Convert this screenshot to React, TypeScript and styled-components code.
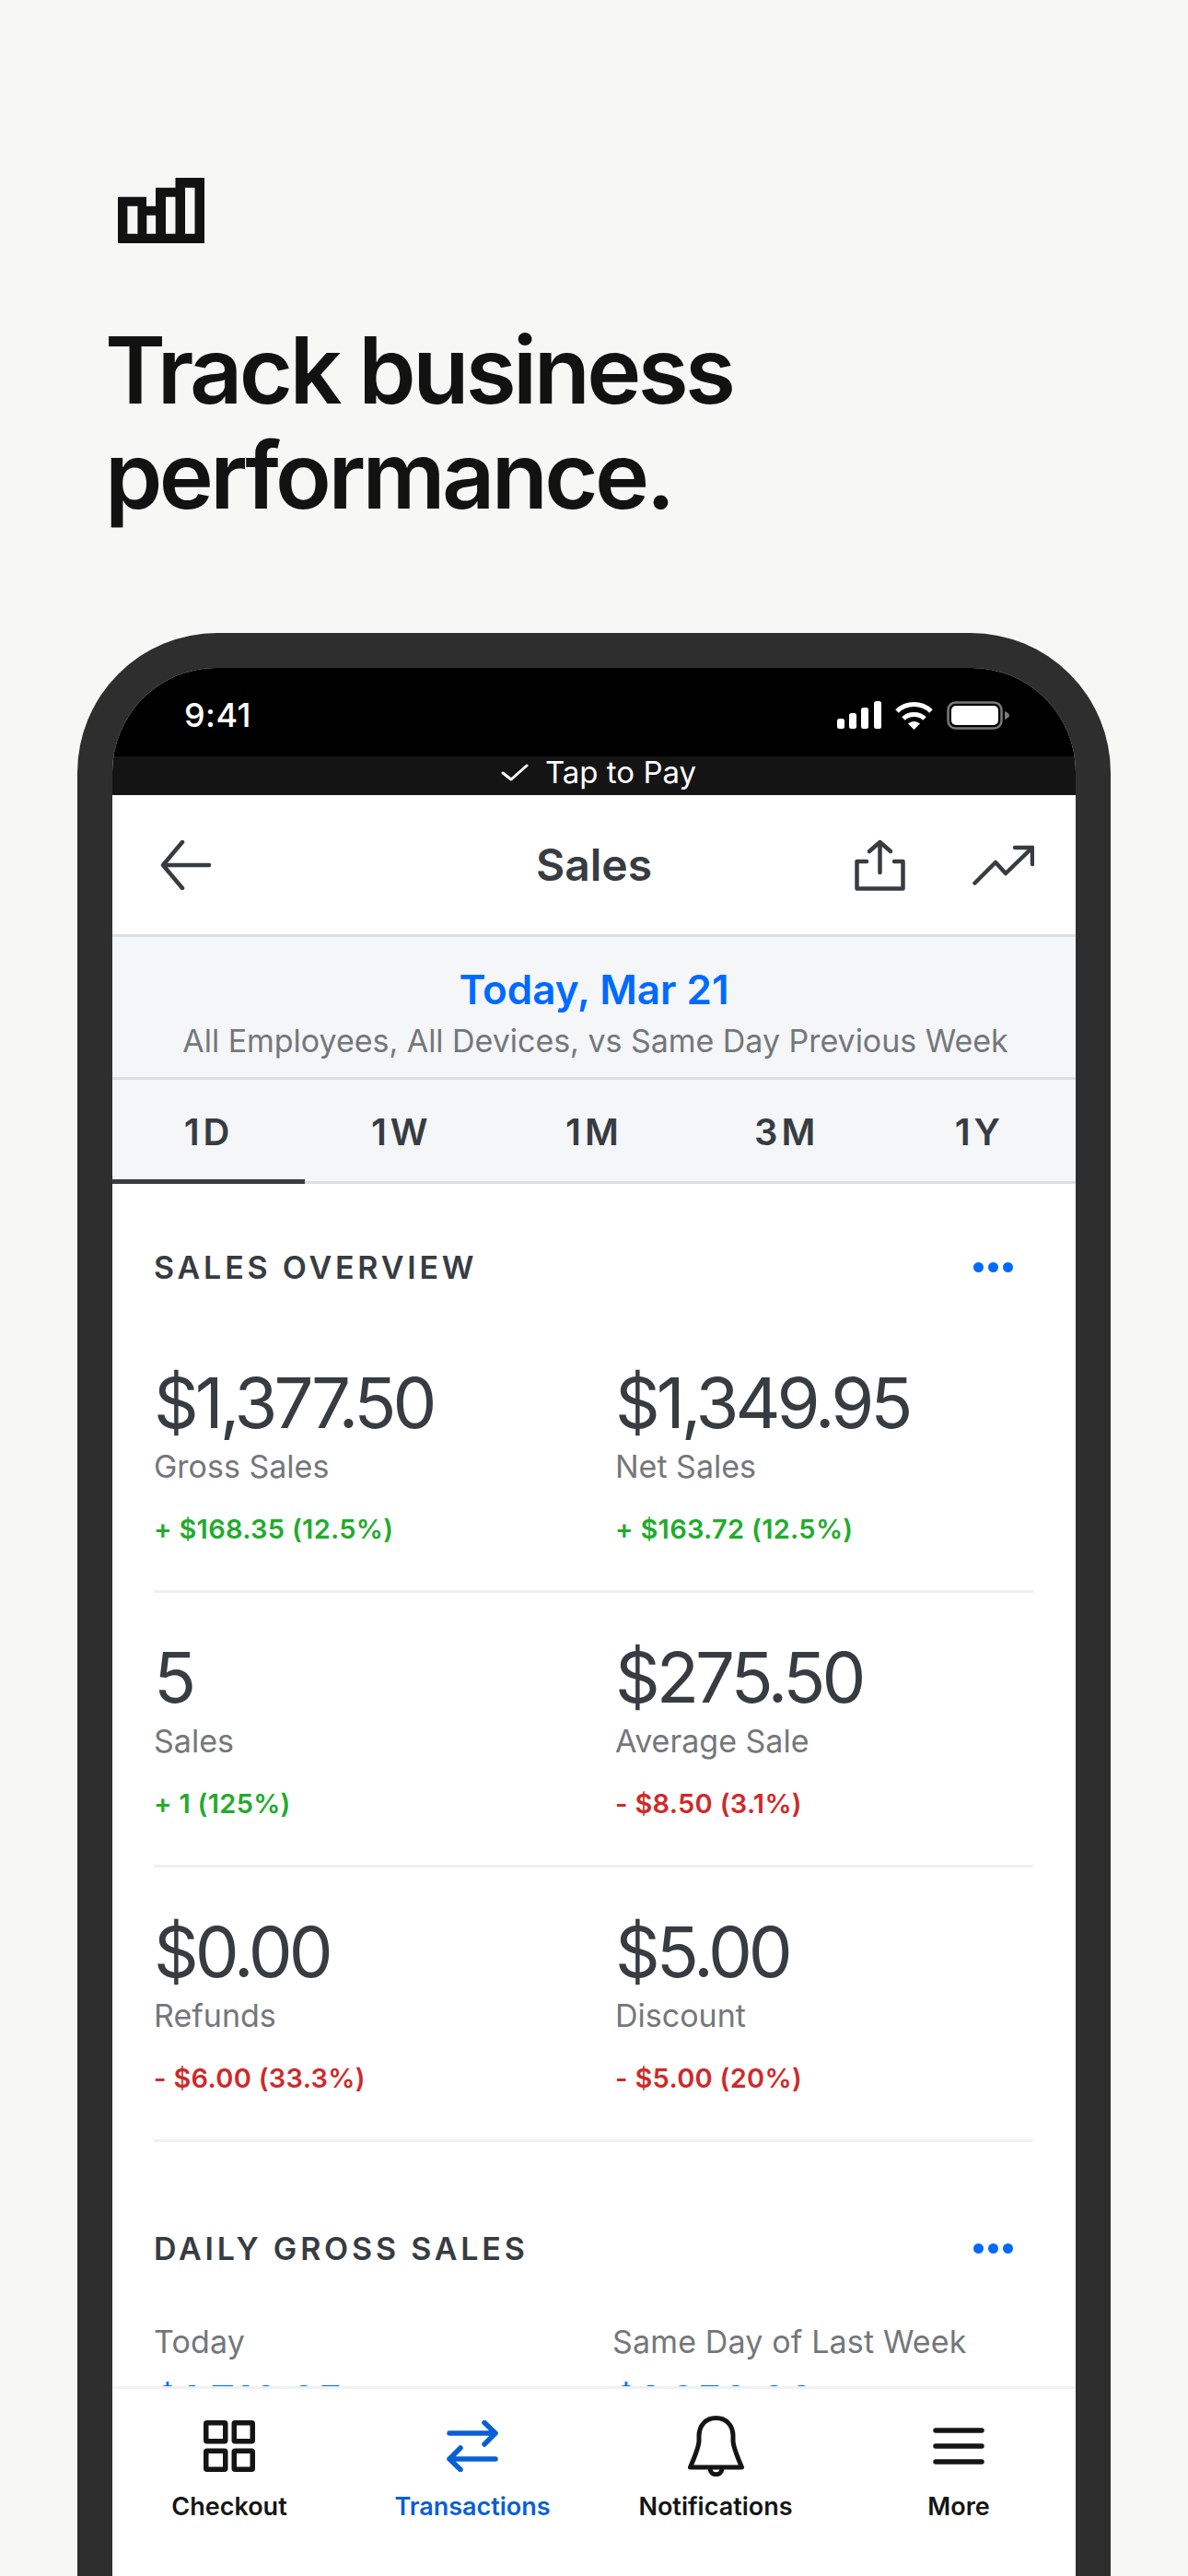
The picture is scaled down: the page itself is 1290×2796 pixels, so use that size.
import React from 'react'
import styled, { createGlobalStyle } from 'styled-components'

const GlobalStyle = createGlobalStyle`
  html, body {
    margin: 0;
    padding: 0;
    background: #f7f7f5;
  }
  body {
    font-family: Inter, "Liberation Sans", sans-serif;
  }
  * {
    box-sizing: border-box;
  }
`

const INK = '#373c42'
const BLUE = '#006aff'

const Page = styled.div`
  width: 1290px;
  height: 2796px;
  overflow: hidden;
  display: flex;
  flex-direction: column;
  background: #f7f7f5;
`

const Hero = styled.header`
  padding: 193px 0 0 114px;
  margin-bottom: 114px;
`

const LogoMark = styled.svg`
  display: block;
  margin: 0 0 81px 14px;
`

const Headline = styled.h1`
  margin: 0;
  font-size: 100px;
  line-height: 114px;
  font-weight: 600;
  letter-spacing: -3.6px;
  color: #121212;
`

const Phone = styled.div`
  flex: 1;
  min-height: 0;
  width: 1122px;
  margin-left: 84px;
  padding: 38px 38px 0 38px;
  background: #2e2e2e;
  border-radius: 152px 152px 0 0;
  display: flex;
`

const Screen = styled.div`
  flex: 1;
  min-width: 0;
  display: flex;
  flex-direction: column;
  overflow: hidden;
  background: #fff;
  border-radius: 113px 113px 0 0;
`

const StatusBar = styled.div`
  height: 96px;
  flex: none;
  padding: 6px 72px 0 78px;
  background: #000;
  color: #fff;
  display: flex;
  align-items: center;
  justify-content: space-between;
`

const Clock = styled.span`
  font-size: 36px;
  font-weight: 500;
  letter-spacing: 0.4px;
`

const StatusIcons = styled.div`
  display: flex;
  align-items: center;
  gap: 14px;
`

const TapBanner = styled.div`
  height: 42px;
  flex: none;
  padding: 0 0 8px 10px;
  background: #141414;
  color: #fff;
  display: flex;
  align-items: center;
  justify-content: center;
  gap: 18px;
  font-size: 33px;
  line-height: 34px;
`

const NavBar = styled.nav`
  height: 154px;
  flex: none;
  padding: 0 52px;
  display: grid;
  grid-template-columns: 1fr auto 1fr;
  align-items: center;
  border-bottom: 3px solid #dcdfe2;
`

const NavTitle = styled.div`
  font-size: 48px;
  font-weight: 600;
  color: ${INK};
`

const NavActions = styled.div`
  display: flex;
  align-items: center;
  justify-content: flex-end;
  gap: 73px;
  margin-right: -7px;
`

const DateBand = styled.div`
  height: 155px;
  flex: none;
  padding-top: 31px;
  background: #f4f6f8;
  border-bottom: 3px solid #dcdfe2;
  text-align: center;
`

const DateTitle = styled.div`
  font-size: 44px;
  line-height: 52px;
  font-weight: 600;
  color: ${BLUE};
`

const DateFilter = styled.div`
  font-size: 34px;
  line-height: 44px;
  margin-top: 8px;
  padding-left: 3px;
  letter-spacing: -0.03px;
  color: #74777b;
`

const RangeTabs = styled.div`
  height: 113px;
  flex: none;
  display: grid;
  grid-template-columns: repeat(5, 1fr);
  background: #f4f6f8;
  border-bottom: 3px solid #dcdfe2;
`

const RangeTab = styled.div<{ $active?: boolean }>`
  display: flex;
  align-items: center;
  justify-content: center;
  padding-top: 4px;
  font-size: 40px;
  font-weight: 600;
  letter-spacing: 4px;
  color: ${INK};
  margin-bottom: -3px;
  border-bottom: 5px solid ${props => (props.$active ? INK : 'transparent')};
`

const Content = styled.main`
  flex: 1;
  min-height: 0;
  overflow: hidden;
  padding: 70px 46px 0 45px;
`

const SectionHead = styled.div<{ $gap: number }>`
  height: 40px;
  display: flex;
  align-items: center;
  justify-content: space-between;
  padding-right: 22px;
  margin-bottom: ${props => props.$gap}px;
`

const SectionTitle = styled.h2`
  margin: 0;
  font-size: 34px;
  font-weight: 600;
  letter-spacing: 3.8px;
  color: ${INK};
`

const Dots = styled.div`
  display: flex;
  gap: 5px;
`

const Dot = styled.span`
  width: 11px;
  height: 11px;
  border-radius: 50%;
  background: ${BLUE};
`

const StatRow = styled.div`
  height: 298px;
  padding-top: 51px;
  display: grid;
  grid-template-columns: 501px 1fr;
  border-bottom: 3px solid #eeeff0;
`

const StatAmount = styled.div`
  font-size: 76px;
  line-height: 80px;
  font-weight: 400;
  letter-spacing: -4px;
  color: ${INK};
`

const StatLabel = styled.div`
  font-size: 34px;
  line-height: 44px;
  margin-top: 8px;
  color: #74777b;
`

const StatDelta = styled.div<{ $up: boolean }>`
  font-size: 29px;
  line-height: 38px;
  font-weight: 600;
  letter-spacing: 0.3px;
  margin-top: 27px;
  color: ${props => (props.$up ? '#22ab2c' : '#cf2a2a')};
`

const DailySection = styled.section`
  margin-top: 95px;
`

const DailyGrid = styled.div`
  display: grid;
  grid-template-columns: 498px 1fr;
`

const DailyLabel = styled.div`
  font-size: 34px;
  line-height: 44px;
  letter-spacing: 0.15px;
  color: #74777b;
`

const DailyAmount = styled.div`
  font-size: 45px;
  line-height: 52px;
  font-weight: 600;
  margin-top: 16px;
  color: ${BLUE};
`

const TabBar = styled.div`
  height: 206px;
  flex: none;
  background: #fff;
  border-top: 3px solid #f0f1f2;
  padding-top: 29px;
  display: grid;
  grid-template-columns: repeat(4, 264px);
  justify-content: center;
  align-content: start;
`

const TabItem = styled.div<{ $active?: boolean }>`
  display: flex;
  flex-direction: column;
  align-items: center;
  font-size: 27px;
  line-height: 34px;
  font-weight: 600;
  color: ${props => (props.$active ? '#0a5fd6' : '#151515')};
`

const TabIcon = styled.div`
  height: 66px;
  margin-bottom: 16px;
  display: flex;
  align-items: center;
  justify-content: center;
`

const stats = [
  [
    { amount: '$1,377.50', label: 'Gross Sales', delta: '+ $168.35 (12.5%)', up: true },
    { amount: '$1,349.95', label: 'Net Sales', delta: '+ $163.72 (12.5%)', up: true },
  ],
  [
    { amount: '5', label: 'Sales', delta: '+ 1 (125%)', up: true },
    { amount: '$275.50', label: 'Average Sale', delta: '- $8.50 (3.1%)', up: false },
  ],
  [
    { amount: '$0.00', label: 'Refunds', delta: '- $6.00 (33.3%)', up: false },
    { amount: '$5.00', label: 'Discount', delta: '- $5.00 (20%)', up: false },
  ],
]

const MoreDots = () => (
  <Dots>
    <Dot />
    <Dot />
    <Dot />
  </Dots>
)

const lineIcon = {
  fill: 'none',
  stroke: 'currentColor',
  strokeLinecap: 'round' as const,
  strokeLinejoin: 'round' as const,
}

const App: React.FC = () => (
  <Page>
    <GlobalStyle />
    <Hero>
      <LogoMark width="94" height="71" viewBox="0 0 94 71">
        <path
          fill="#121212"
          fillRule="evenodd"
          d="M0 20.7H31V30.7H41V10.7H62.5V0H94V71H0ZM10.4 30.7V60.7H21.4V30.7ZM31.3 40.7V60.7H41.1V40.7ZM52 20.7V60.7H62.5V20.7ZM73 10.7V60.7H83.5V10.7Z"
        />
      </LogoMark>
      <Headline>
        Track business
        <br />
        performance.
      </Headline>
    </Hero>
    <Phone>
      <Screen>
        <StatusBar>
          <Clock>9:41</Clock>
          <StatusIcons>
            <svg width="48" height="30" viewBox="0 0 48 30" fill="#fff">
              <rect x="0" y="19" width="8" height="11" rx="2.5" />
              <rect x="13" y="13" width="8" height="17" rx="2.5" />
              <rect x="26" y="7" width="8" height="23" rx="2.5" />
              <rect x="40" y="0" width="8" height="30" rx="2.5" />
            </svg>
            <svg width="43" height="31" viewBox="0 0 43 31" fill="none" stroke="#fff" strokeWidth="5">
              <path d="M3 11C13 1 30 1 40 11" />
              <path d="M10 19C16 13 27 13 33 19" />
              <path d="M21.5 31L15 24.5C19 21 24 21 28 24.5Z" fill="#fff" stroke="none" />
            </svg>
            <svg width="68" height="31" viewBox="0 0 68 31">
              <rect x="1.5" y="1.5" width="58" height="28" rx="8" fill="none" stroke="#7a7a7a" strokeWidth="2.5" />
              <rect x="5" y="5" width="51" height="21" rx="5" fill="#fff" />
              <path d="M63 11C66 12 68 14 68 15.5C68 17 66 19 63 20Z" fill="#7a7a7a" />
            </svg>
          </StatusIcons>
        </StatusBar>
        <TapBanner>
          <svg width="30" height="19" viewBox="0 0 30 19" {...lineIcon} strokeWidth="3">
            <path d="M2 10L11 17L28 2" />
          </svg>
          Tap to Pay
        </TapBanner>
        <NavBar>
          <svg width="55" height="54" viewBox="0 0 55 54" color={INK} {...lineIcon} strokeWidth="4.5">
            <path d="M3 27H53M24 2L3 27L24 52" />
          </svg>
          <NavTitle>Sales</NavTitle>
          <NavActions>
            <svg width="55" height="56" viewBox="0 0 55 56" color={INK} {...lineIcon} strokeWidth="4.5">
              <path d="M13 24H2.5V53.5H52.5V24H43" />
              <path d="M27.5 3V36M16 13L27.5 3L39 13" />
            </svg>
            <svg width="67" height="44" viewBox="0 0 67 44" color={INK} {...lineIcon} strokeWidth="4.5">
              <path d="M2.5 41.5L25 19L36 31L65 3M46 3H65V21" />
            </svg>
          </NavActions>
        </NavBar>
        <DateBand>
          <DateTitle>Today, Mar 21</DateTitle>
          <DateFilter>All Employees, All Devices, vs Same Day Previous Week</DateFilter>
        </DateBand>
        <RangeTabs>
          {['1D', '1W', '1M', '3M', '1Y'].map((range, i) => (
            <RangeTab key={range} $active={i === 0}>
              {range}
            </RangeTab>
          ))}
        </RangeTabs>
        <Content>
          <SectionHead $gap={36}>
            <SectionTitle>SALES OVERVIEW</SectionTitle>
            <MoreDots />
          </SectionHead>
          {stats.map(row => (
            <StatRow key={row[0].label}>
              {row.map(stat => (
                <div key={stat.label}>
                  <StatAmount>{stat.amount}</StatAmount>
                  <StatLabel>{stat.label}</StatLabel>
                  <StatDelta $up={stat.up}>{stat.delta}</StatDelta>
                </div>
              ))}
            </StatRow>
          ))}
          <DailySection>
            <SectionHead $gap={60}>
              <SectionTitle>DAILY GROSS SALES</SectionTitle>
              <MoreDots />
            </SectionHead>
            <DailyGrid>
              <div>
                <DailyLabel>Today</DailyLabel>
                <DailyAmount>$1,710.85</DailyAmount>
              </div>
              <div>
                <DailyLabel>Same Day of Last Week</DailyLabel>
                <DailyAmount>$1,250.00</DailyAmount>
              </div>
            </DailyGrid>
          </DailySection>
        </Content>
        <TabBar>
          <TabItem>
            <TabIcon>
              <svg width="56" height="56" viewBox="0 0 56 56" {...lineIcon} strokeWidth="5.5">
                <rect x="2.75" y="2.75" width="21" height="20" rx="1" />
                <rect x="33.25" y="2.75" width="20" height="20" rx="1" />
                <rect x="2.75" y="33.25" width="21" height="20" rx="1" />
                <rect x="33.25" y="33.25" width="20" height="20" rx="1" />
              </svg>
            </TabIcon>
            Checkout
          </TabItem>
          <TabItem $active>
            <TabIcon>
              <svg width="56" height="56" viewBox="0 0 56 56" {...lineIcon} strokeWidth="5.5">
                <path d="M3 14H53M41 2.5L53 14L41 26" />
                <path d="M53 42H3M15 30L3 42L15 53.5" />
              </svg>
            </TabIcon>
            Transactions
          </TabItem>
          <TabItem>
            <TabIcon>
              <svg width="61" height="66" viewBox="0 0 61 66" {...lineIcon} strokeWidth="5">
                <path d="M30.5 2.5C19 2.5 12 11 12 22V27C12 33 9 41 2.5 56H58.5C52 41 49 33 49 27V22C49 11 42 2.5 30.5 2.5Z" />
                <path d="M24 57C24 66 37 66 37 57" />
              </svg>
            </TabIcon>
            Notifications
          </TabItem>
          <TabItem>
            <TabIcon>
              <svg width="56" height="40" viewBox="0 0 56 40" {...lineIcon} strokeWidth="5.5">
                <path d="M3 3H53M3 20H53M3 37H53" />
              </svg>
            </TabIcon>
            More
          </TabItem>
        </TabBar>
      </Screen>
    </Phone>
  </Page>
)

export default App
